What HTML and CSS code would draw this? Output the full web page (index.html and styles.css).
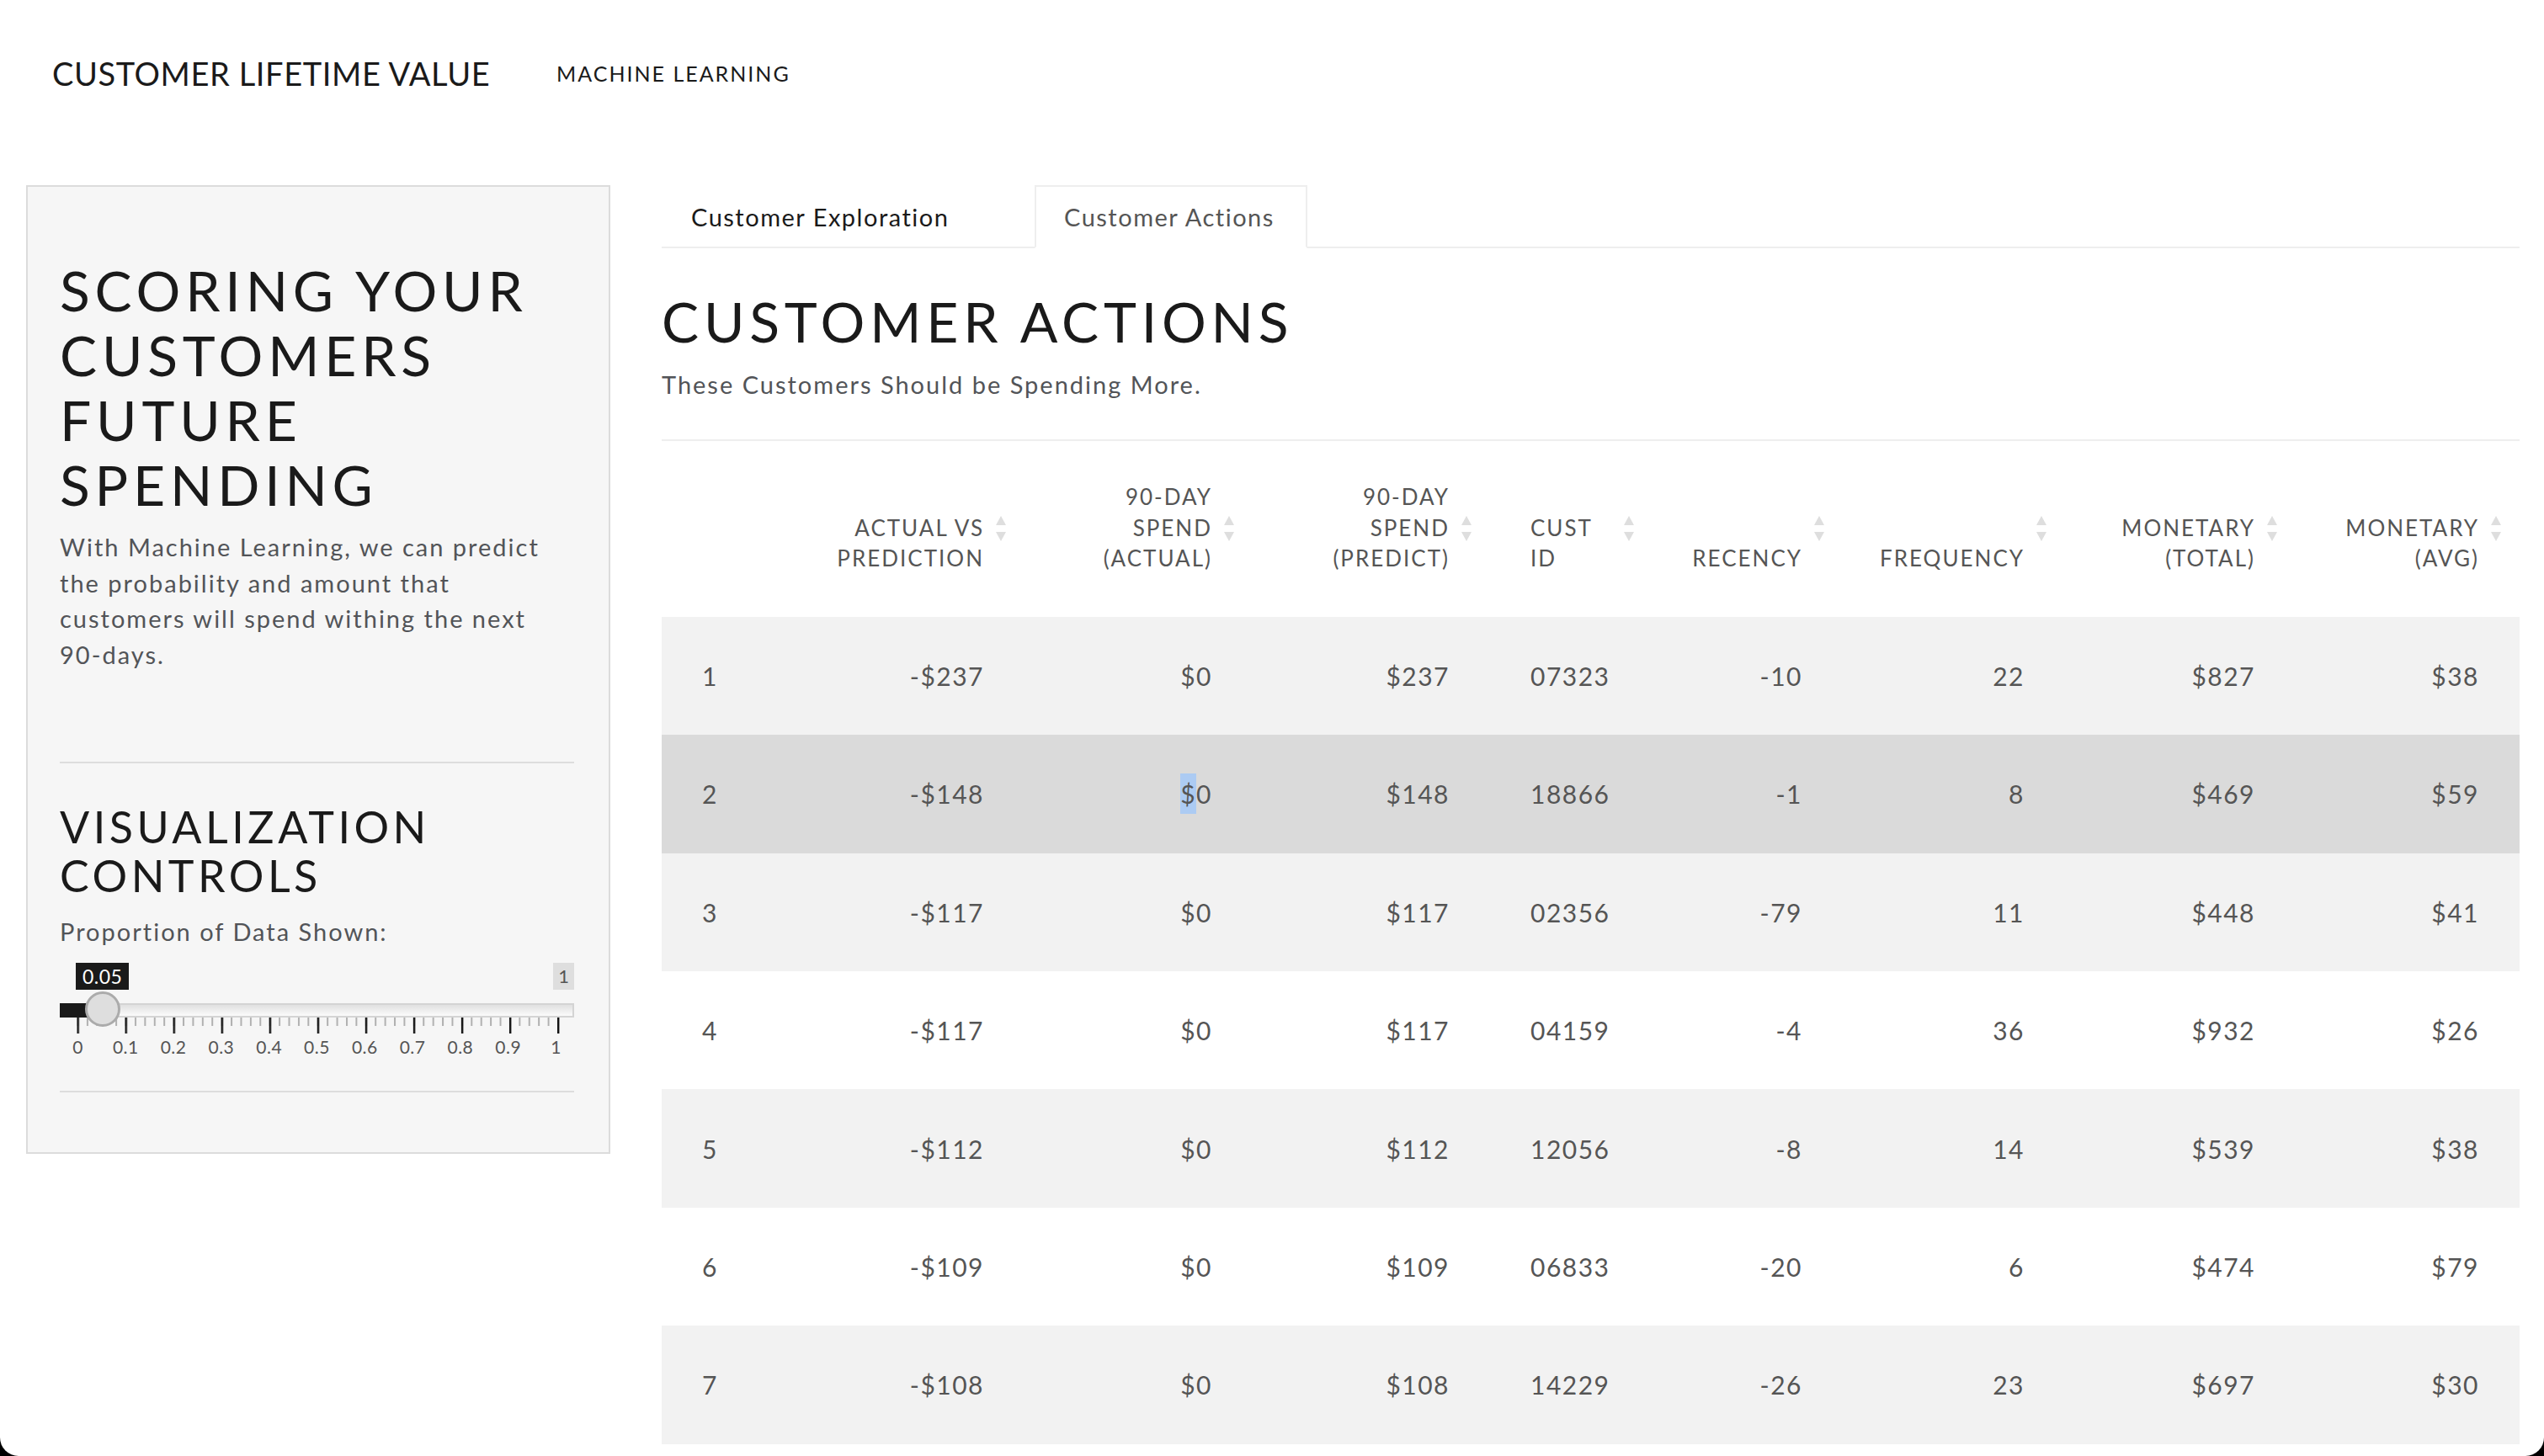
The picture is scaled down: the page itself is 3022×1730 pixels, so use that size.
FILE: index.html
```html
<!DOCTYPE html>
<html lang="en">
<head>
<meta charset="utf-8">
<title>Customer Lifetime Value</title>
<link rel="stylesheet" href="styles.css">
</head>
<body>
<div class="window">
  <header class="topbar">
    <div class="brand">CUSTOMER LIFETIME VALUE</div>
    <nav class="topnav"><a class="topnav-link" href="#">MACHINE LEARNING</a></nav>
  </header>

  <div class="content">
    <aside class="sidebar">
      <h2 class="side-title">SCORING YOUR CUSTOMERS FUTURE SPENDING</h2>
      <p class="side-text">With Machine Learning, we can predict the probability and amount that customers will spend withing the next 90-days.</p>
      <hr class="side-rule rule-top">
      <h3 class="side-subtitle">VISUALIZATION CONTROLS</h3>
      <label class="control-label">Proportion of Data Shown:</label>
      <div class="slider">
        <div class="slider-limits"><span class="slider-max">1</span></div>
        <span class="slider-value">0.05</span>
        <div class="slider-track">
          <div class="slider-bar"></div>
          <div class="slider-line"></div>
        </div>
        <span class="slider-thumb"></span>
        <svg class="slider-ticks" width="611" height="19" viewBox="0 0 611 19">
          <defs>
            <pattern id="minor" x="20.5" y="0" width="11.41" height="19" patternUnits="userSpaceOnUse">
              <rect x="0" y="0" width="2" height="10" fill="#b0b0b0"/>
            </pattern>
            <pattern id="major" x="20.5" y="0" width="57.05" height="19" patternUnits="userSpaceOnUse">
              <rect x="0" y="0" width="2.4" height="19" fill="#111111"/>
            </pattern>
          </defs>
          <rect x="20" y="0" width="574" height="19" fill="url(#minor)"/>
          <rect x="20" y="0" width="574" height="19" fill="url(#major)"/>
        </svg>
        <div class="slider-grid">
          <span>0</span><span>0.1</span><span>0.2</span><span>0.3</span><span>0.4</span><span>0.5</span><span>0.6</span><span>0.7</span><span>0.8</span><span>0.9</span><span>1</span>
        </div>
      </div>
      <hr class="side-rule rule-bottom">
    </aside>

    <main class="main">
      <ul class="tabs">
        <li class="tab tab-explore">Customer Exploration</li>
        <li class="tab tab-actions">Customer Actions</li>
      </ul>
      <h2 class="page-title">CUSTOMER ACTIONS</h2>
      <p class="page-sub">These Customers Should be Spending More.</p>
      <hr class="page-rule">

      <table class="data">
        <colgroup>
          <col class="c0"><col class="c1"><col class="c2"><col class="c3"><col class="c4"><col class="c5"><col class="c6"><col class="c7"><col class="c8">
        </colgroup>
        <thead>
          <tr>
            <th class="idx"></th>
            <th>ACTUAL VS<br>PREDICTION<span class="sort"></span></th>
            <th>90-DAY<br>SPEND<br>(ACTUAL)<span class="sort"></span></th>
            <th>90-DAY<br>SPEND<br>(PREDICT)<span class="sort"></span></th>
            <th class="left">CUST<br>ID<span class="sort"></span></th>
            <th>RECENCY<span class="sort"></span></th>
            <th>FREQUENCY<span class="sort"></span></th>
            <th>MONETARY<br>(TOTAL)<span class="sort"></span></th>
            <th>MONETARY<br>(AVG)<span class="sort"></span></th>
          </tr>
        </thead>
        <tbody>
          <tr><td class="idx">1</td><td>-$237</td><td>$0</td><td>$237</td><td class="left">07323</td><td>-10</td><td>22</td><td>$827</td><td>$38</td></tr>
          <tr class="hover"><td class="idx">2</td><td>-$148</td><td><span class="sel">$</span>0</td><td>$148</td><td class="left">18866</td><td>-1</td><td>8</td><td>$469</td><td>$59</td></tr>
          <tr><td class="idx">3</td><td>-$117</td><td>$0</td><td>$117</td><td class="left">02356</td><td>-79</td><td>11</td><td>$448</td><td>$41</td></tr>
          <tr><td class="idx">4</td><td>-$117</td><td>$0</td><td>$117</td><td class="left">04159</td><td>-4</td><td>36</td><td>$932</td><td>$26</td></tr>
          <tr><td class="idx">5</td><td>-$112</td><td>$0</td><td>$112</td><td class="left">12056</td><td>-8</td><td>14</td><td>$539</td><td>$38</td></tr>
          <tr><td class="idx">6</td><td>-$109</td><td>$0</td><td>$109</td><td class="left">06833</td><td>-20</td><td>6</td><td>$474</td><td>$79</td></tr>
          <tr><td class="idx">7</td><td>-$108</td><td>$0</td><td>$108</td><td class="left">14229</td><td>-26</td><td>23</td><td>$697</td><td>$30</td></tr>
        </tbody>
      </table>
    </main>
  </div>
</div>
</body>
</html>
```

FILE: styles.css
```css
html {
  background: #000000;
}

body {
  margin: 0;
  font-family: Lato, "Noto Sans", "DejaVu Sans", sans-serif;
  color: #1a1a1a;
}

.window {
  width: 3022px;
  height: 1730px;
  background: #ffffff;
  border-radius: 0 0 22px 22px;
  overflow: hidden;
}

/* ---------- top bar ---------- */
.topbar {
  height: 174px;
  display: flex;
  align-items: center;
  padding-left: 62px;
}

.brand {
  width: 599px;
  flex: none;
  font-size: 38px;
  letter-spacing: 0.6px;
  color: #1a1a1a;
}

.topnav-link {
  font-size: 25px;
  letter-spacing: 2px;
  color: #1a1a1a;
  text-decoration: none;
}

/* ---------- layout ---------- */
.content {
  display: flex;
  align-items: flex-start;
  gap: 61px;
  padding: 46px 29px 0 31px;
}

/* ---------- sidebar ---------- */
.sidebar {
  box-sizing: border-box;
  width: 694px;
  flex: none;
  background: #f6f6f6;
  border: 2px solid #dcdcdc;
  padding: 84px 41px 71px 38px;
}

.side-title {
  margin: 0;
  font-size: 66px;
  line-height: 77px;
  letter-spacing: 5.8px;
  font-weight: 400;
  color: #1a1a1a;
}

.side-text {
  margin: 15px 0 0;
  font-size: 29px;
  line-height: 42.5px;
  letter-spacing: 2px;
  color: #525458;
}

.side-rule {
  border: 0;
  border-top: 2px solid #dddddd;
  height: 0;
  margin: 0;
}

.rule-top {
  margin-top: 106px;
}

.rule-bottom {
  margin-top: 40px;
}

.side-subtitle {
  margin: 46px 0 0;
  font-size: 52px;
  line-height: 58px;
  letter-spacing: 4.5px;
  font-weight: 400;
  color: #1a1a1a;
}

.control-label {
  display: block;
  margin-top: 17px;
  font-size: 29px;
  line-height: 42px;
  letter-spacing: 2px;
  color: #525458;
}

/* ---------- slider ---------- */
.slider {
  position: relative;
}

.slider-limits {
  display: flex;
  justify-content: flex-end;
  padding-top: 16px;
  height: 32px;
}

.slider-max {
  height: 32px;
  padding: 0 6px;
  background: #dedede;
  color: #555555;
  font-size: 22px;
  line-height: 32px;
}

.slider-value {
  position: absolute;
  left: 19px;
  top: 16px;
  height: 32px;
  padding: 0 8px;
  background: #1a1a1a;
  color: #ffffff;
  font-size: 23px;
  line-height: 32px;
  letter-spacing: 0.5px;
}

.slider-track {
  margin-top: 16px;
  height: 17px;
  display: flex;
}

.slider-bar {
  width: 50px;
  background: #1a1a1a;
}

.slider-line {
  flex: 1;
  box-sizing: border-box;
  border: 2px solid #d4d4d4;
  border-left: 0;
  background: linear-gradient(#e0e0e0, #fbfbfb);
}

.slider-thumb {
  position: absolute;
  left: 30px;
  top: 50px;
  width: 42px;
  height: 42px;
  box-sizing: border-box;
  border-radius: 50%;
  background: #dedede;
  border: 3px solid #ababab;
}

.slider-ticks {
  display: block;
}

.slider-grid {
  display: flex;
  justify-content: space-between;
  margin: 4px 21.5px 0;
  height: 24px;
}

.slider-grid span {
  width: 0;
  display: flex;
  justify-content: center;
  white-space: nowrap;
  font-size: 21px;
  line-height: 24px;
  letter-spacing: 0.5px;
  color: #555555;
}

/* ---------- main ---------- */
.main {
  flex: 1;
  min-width: 0;
}

.tabs {
  display: flex;
  list-style: none;
  margin: 0;
  padding: 0;
  height: 73px;
  border-bottom: 2px solid #eeeeee;
}

.tab {
  box-sizing: border-box;
  height: 75px;
  margin-bottom: -2px;
  font-size: 29px;
  line-height: 71px;
  letter-spacing: 1.5px;
  white-space: nowrap;
}

.tab-explore {
  width: 443px;
  padding-left: 33px;
  color: #1a1a1a;
  border: 2px solid transparent;
}

.tab-actions {
  width: 324px;
  padding-left: 33px;
  color: #555555;
  background: #ffffff;
  border: 2px solid #eeeeee;
  border-bottom-color: #ffffff;
}

.page-title {
  margin: 48px 0 0;
  font-size: 66px;
  line-height: 77px;
  letter-spacing: 5.8px;
  font-weight: 400;
  color: #1a1a1a;
}

.page-sub {
  margin: 16px 0 0;
  font-size: 29px;
  line-height: 42px;
  letter-spacing: 2px;
  color: #525458;
}

.page-rule {
  border: 0;
  border-top: 2px solid #eeeeee;
  height: 0;
  margin: 44px 0 0;
}

/* ---------- table ---------- */
.data {
  width: 100%;
  table-layout: fixed;
  border-collapse: collapse;
}

.c0 { width: 167px; }
.c1 { width: 264px; }
.c2 { width: 271px; }
.c3 { width: 282px; }
.c4 { width: 193px; }
.c5 { width: 226px; }
.c6 { width: 264px; }
.c7 { width: 274px; }
.c8 { width: 266px; }

.data th {
  position: relative;
  padding: 48px 48px 51px 10px;
  vertical-align: bottom;
  text-align: right;
  white-space: nowrap;
  font-size: 26px;
  line-height: 36.6px;
  letter-spacing: 2px;
  font-weight: 400;
  color: #555555;
}

.data th.left {
  text-align: left;
  padding-left: 48px;
}

.sort {
  position: absolute;
  right: 22px;
  top: 50%;
  width: 12px;
  height: 30px;
  margin-top: -15px;
}

.sort::before,
.sort::after {
  content: "";
  position: absolute;
  left: 0;
  border-left: 6px solid transparent;
  border-right: 6px solid transparent;
}

.sort::before {
  top: 0;
  border-bottom: 11px solid #dedede;
}

.sort::after {
  bottom: 0;
  border-top: 11px solid #dedede;
}

.data td {
  height: 140.4px;
  padding: 0 48px;
  text-align: right;
  vertical-align: middle;
  font-size: 30px;
  letter-spacing: 1.5px;
  color: #555555;
  white-space: nowrap;
}

.data td.idx,
.data td.left {
  text-align: left;
}

.data tbody tr:nth-child(odd) td {
  background: #f2f2f2;
}

.data tbody tr.hover td {
  background: #dadada;
}

.sel {
  background: #accbf3;
  padding: 6px 0;
}
```
